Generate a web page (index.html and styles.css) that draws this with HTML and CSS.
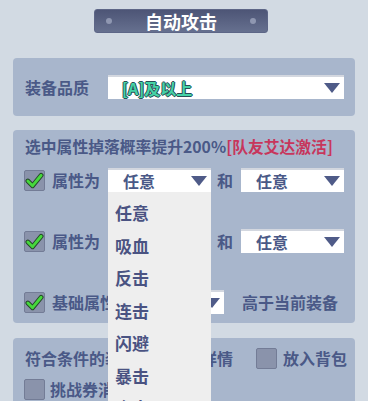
FILE: index.html
```html
<!DOCTYPE html>
<html lang="zh">
<head>
<meta charset="utf-8">
<link rel="stylesheet" href="styles.css">
</head>
<body>
<div class="title"><span class="dot"></span><span class="title-text">自动攻击</span><span class="dot"></span></div>

<section class="panel panel-quality">
  <span class="label">装备品质</span>
  <div class="select select-wide"><span class="quality">[A]及以上</span><span class="arrow"></span></div>
</section>

<section class="panel panel-attr">
  <div class="header">选中属性掉落概率提升200%<span class="red">[队友艾达激活]</span></div>
  <div class="row">
    <span class="check on"><svg viewBox="0 0 20 20" width="20" height="20"><path d="M3 11 L8 16 L17 5" fill="none" stroke="#25452a" stroke-width="5" stroke-linecap="round" stroke-linejoin="round"/><path d="M3 11 L8 16 L17 5" fill="none" stroke="#46d83c" stroke-width="3" stroke-linecap="round" stroke-linejoin="round"/></svg></span>
    <span class="label">属性为</span>
    <div class="select select-mid"><span class="val">任意</span><span class="arrow"></span></div>
    <span class="label and">和</span>
    <div class="select select-mid"><span class="val">任意</span><span class="arrow"></span></div>
  </div>
  <div class="row">
    <span class="check on"><svg viewBox="0 0 20 20" width="20" height="20"><path d="M3 11 L8 16 L17 5" fill="none" stroke="#25452a" stroke-width="5" stroke-linecap="round" stroke-linejoin="round"/><path d="M3 11 L8 16 L17 5" fill="none" stroke="#46d83c" stroke-width="3" stroke-linecap="round" stroke-linejoin="round"/></svg></span>
    <span class="label">属性为</span>
    <div class="select select-mid"><span class="val">任意</span><span class="arrow"></span></div>
    <span class="label and">和</span>
    <div class="select select-mid"><span class="val">任意</span><span class="arrow"></span></div>
  </div>
  <div class="row">
    <span class="check on"><svg viewBox="0 0 20 20" width="20" height="20"><path d="M3 11 L8 16 L17 5" fill="none" stroke="#25452a" stroke-width="5" stroke-linecap="round" stroke-linejoin="round"/><path d="M3 11 L8 16 L17 5" fill="none" stroke="#46d83c" stroke-width="3" stroke-linecap="round" stroke-linejoin="round"/></svg></span>
    <span class="label">基础属性</span>
    <div class="select select-base"><span class="val">任意</span><span class="arrow"></span></div>
    <span class="label higher">高于当前装备</span>
  </div>
</section>

<section class="panel panel-bag">
  <div class="row bag-row">
    <span class="label lead">符合条件的装备显示物品详情</span>
    <span class="check off"></span>
    <span class="label">放入背包</span>
  </div>
  <div class="row bag-row2">
    <span class="check off"></span>
    <span class="label">挑战券消耗完停止</span>
  </div>
</section>

<ul class="menu">
  <li>任意</li>
  <li>吸血</li>
  <li>反击</li>
  <li>连击</li>
  <li>闪避</li>
  <li>暴击</li>
  <li>命中</li>
</ul>
</body>
</html>
```

FILE: styles.css
```css
html, body {
  margin: 0;
  padding: 0;
}
body {
  position: relative;
  width: 368px;
  height: 401px;
  overflow: hidden;
  background: #d2dae3;
  font-family: "Noto Sans CJK SC", "Noto Sans", sans-serif;
  font-weight: 700;
  color: #4a5987;
  font-size: 16px;
  line-height: 20px;
}
.label {
  white-space: nowrap;
  flex: none;
}
.title {
  margin: 9px 0 0 94px;
  width: 174px;
  height: 24px;
  box-sizing: border-box;
  border-radius: 3px;
  background: linear-gradient(#4d5576, #66708f);
  border: 1px solid #5d6687;
  display: flex;
  align-items: center;
  justify-content: space-between;
  padding: 0 11px 0 11px;
}
.dot {
  width: 6px;
  height: 6px;
  border-radius: 50%;
  background: #8f97b1;
}
.title-text {
  color: #ffffff;
  font-size: 18px;
  line-height: 22px;
}
.panel {
  margin: 0 13px;
  background: #a8b6cc;
  border-radius: 4px;
  box-sizing: border-box;
}
.panel-quality {
  margin-top: 25px;
  height: 58px;
  display: flex;
  align-items: center;
  padding: 0 11px 0 12px;
  justify-content: space-between;
}
.select {
  background: #ffffff;
  height: 24px;
  box-sizing: border-box;
  border-top: 2px solid #d3d7df;
  display: flex;
  align-items: center;
  justify-content: space-between;
  padding: 0 4px 0 15px;
  flex: none;
}
.select-wide {
  width: 236px;
  padding-left: 14px;
}
.select-mid {
  width: 103px;
}
.select-base {
  width: 100px;
}
.quality {
  color: #45d2a6;
  font-size: 16px;
  text-shadow: -1px 0 #2b4e55, 1px 0 #2b4e55, 0 -1px #2b4e55, 0 1px #2b4e55;
}
.val {
  color: #4a5987;
}
.arrow {
  width: 0;
  height: 0;
  border-left: 8px solid transparent;
  border-right: 8px solid transparent;
  border-top: 10px solid #4f5b88;
}
.panel-attr {
  margin-top: 14px;
  height: 193px;
  padding: 7px 11px 0 11px;
}
.header {
  font-size: 15.8px;
  white-space: nowrap;
  padding-left: 1px;
}
.red {
  color: #c7365c;
}
.row {
  display: flex;
  align-items: center;
  height: 24px;
}
.panel-attr .row {
  margin-top: 11px;
}
.panel-attr .row + .row {
  margin-top: 37px;
}
.check {
  width: 21px;
  height: 21px;
  box-sizing: border-box;
  background: #8a93ab;
  border: 1px solid #737c96;
  border-radius: 2px;
  display: flex;
  align-items: center;
  justify-content: center;
  margin-right: 7px;
  flex: none;
}
.row .label {
  margin-right: 8px;
}
.row .and {
  margin: 0 8px 0 6px;
}
.row .higher {
  margin-left: 18px;
}
.panel-bag {
  margin-top: 15px;
  height: 80px;
  padding: 9px 11px 0 11px;
}
.bag-row {
  height: 22px;
}
.row .lead {
  width: 232px;
  overflow: hidden;
  margin-right: 0;
  padding-left: 1px;
  box-sizing: border-box;
}
.bag-row .check {
  margin-right: 6px;
}
.bag-row2 {
  margin-top: 9px;
  height: 22px;
}
.bag-row2 .check {
  margin-right: 5px;
}
.menu {
  position: absolute;
  left: 108px;
  top: 192px;
  width: 103px;
  height: 209px;
  margin: 0;
  padding: 5px 0 0 0;
  list-style: none;
  background: #eeeeee;
  box-sizing: border-box;
  overflow: hidden;
}
.menu li {
  height: 32.5px;
  line-height: 32px;
  padding-left: 7px;
  font-size: 17px;
  color: #4a5382;
}
```
